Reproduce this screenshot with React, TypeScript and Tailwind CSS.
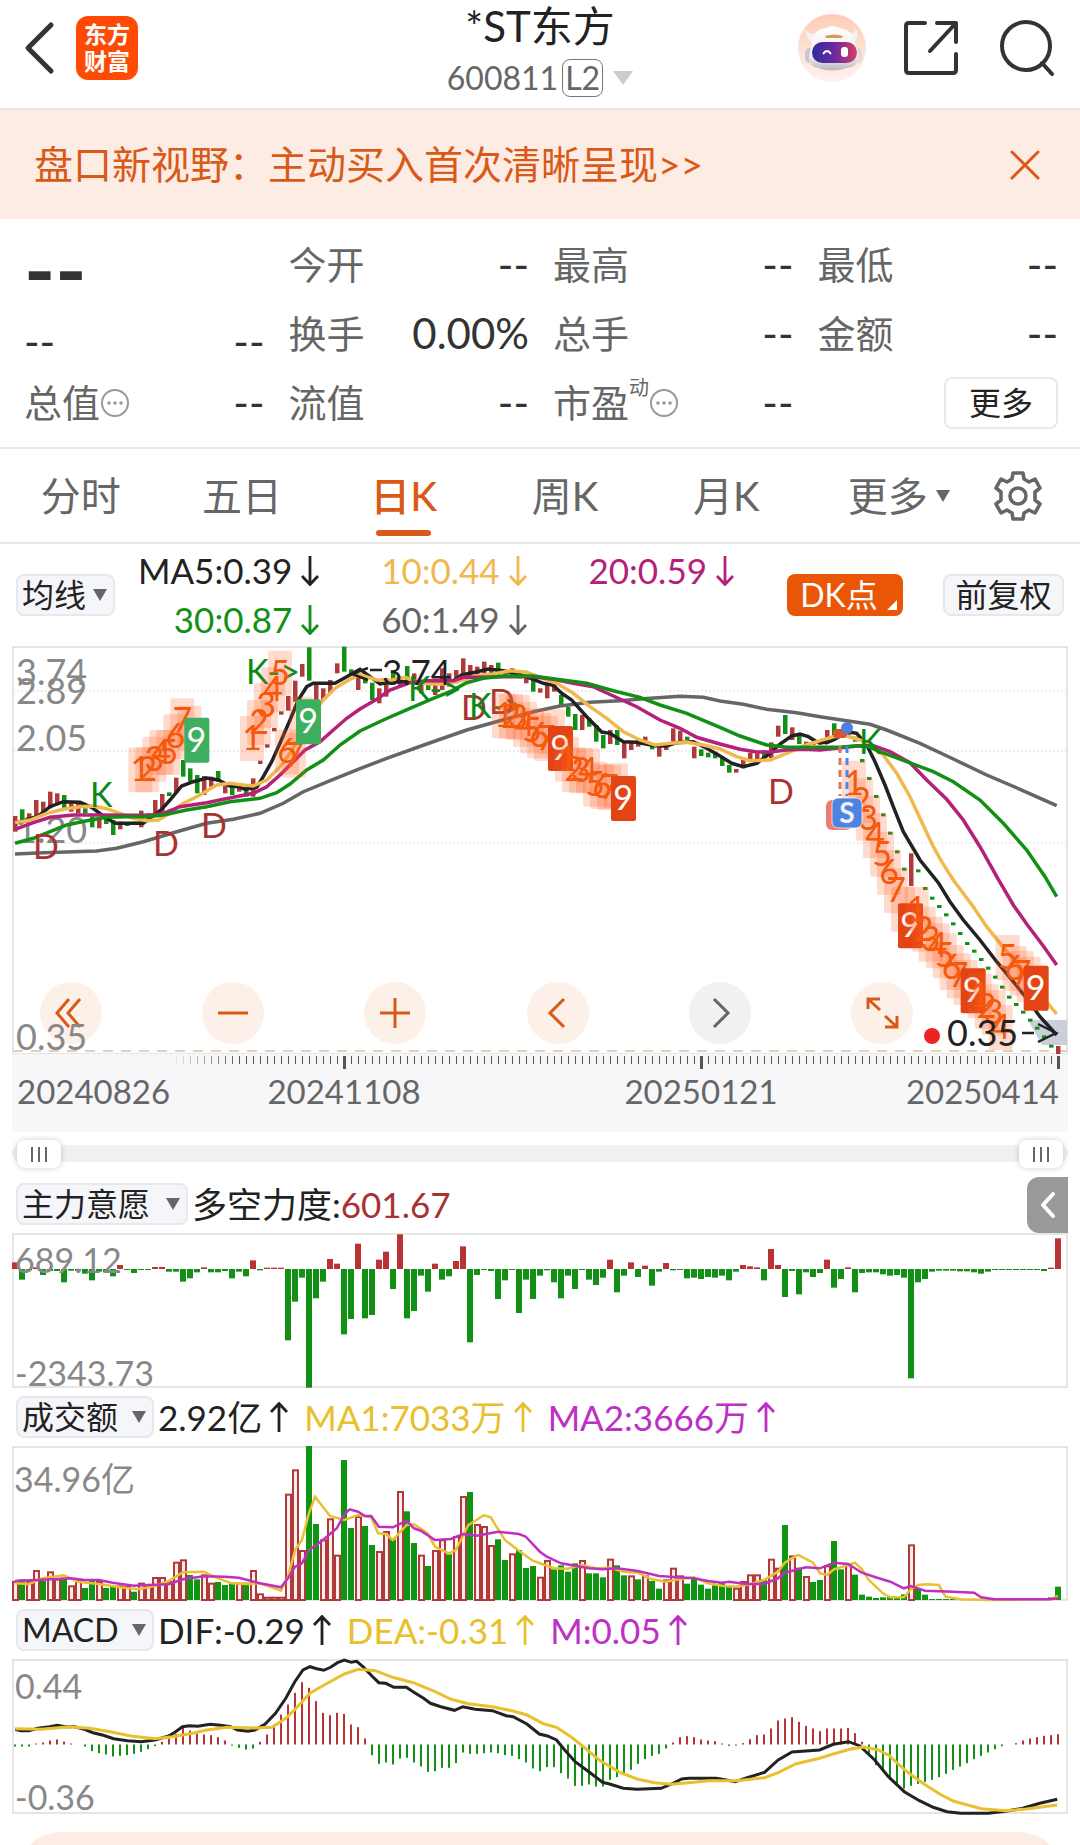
import React from "react";

type Pt = [number, number];

const parse = (s: string): Pt[] =>
  s.trim().split(/\s+/).map((p) => p.split(",").map(Number) as Pt);

const path = (s: string, kx: number, ky: number) =>
  parse(s)
    .map(([x, y], i) => `${i ? "L" : "M"}${(x / kx).toFixed(1)} ${(y / ky).toFixed(1)}`)
    .join("");

const barX = (i: number) => 15 + 7 * i;

/* ---------- Daily K data ---------- */

const CANDLES = `R828-875 G808-840 R820-835 R780-825 R785-818 R755-805 R760-790 G765-805 R790-815 R790-820
G805-820 G830-862 R835-865 G830-852 G840-885 R845-868 G848-858 G845-855 R812-862 R820-835
R780-820 R762-815 G757-768 R713-758 G660-710 G685-725 G705-760 R708-765 R710-740 G693-725
R735-760 G735-765 R735-755 G740-770 R715-770 R662-672 R613-623 R564-574 R514-524 R468-512
R422-485 R372-410 G322-422 R430-480 R445-480 R420-460 R370-400 G320-395 G388-402 R400-450
G415-430 G428-480 R445-490 R430-470 G390-430 R410-440 G378-420 R400-430 R430-460 G425-450
R435-465 R385-450 R400-440 R390-430 R355-415 R375-410 R380-410 R365-400 R375-400 G368-405
R390-410 R385-408 G395-415 R405-430 G415-455 R445-458 R430-475 R430-455 G465-495 G500-530
G522-570 R525-570 G535-560 G555-605 G585-625 R570-612 G570-615 R605-655 R605-630 R600-620
R590-615 G615-628 R620-650 R615-630 R565-605 R572-605 G590-600 R620-655 G628-648 G638-652
G635-655 G650-678 G675-698 R687-698 R655-685 R638-665 R640-665 G632-655 R607-655 R557-590
G525-582 R562-600 G580-612 R605-612 R605-615 R605-615 R570-608 G550-600 R570-590 R565-590
G590-605 G657-667 G711-720 G765-774 G820-829 G875-884 G931-940 G983-992 R940-1038 G988-997
G1041-1050 G1070-1079 G1095-1104 G1120-1129 G1147-1156 G1176-1185 G1206-1215 G1229-1238 G1254-1263 G1280-1289
G1307-1316 G1337-1346 G1367-1376 G1389-1398 G1412-1421 G1436-1445 G1460-1469 G1486-1495 G1514-1523 R1518-1545`
  .split(/\s+/)
  .map((c) => {
    const [top, bottom] = c.slice(1).split("-").map(Number);
    return { up: c[0] === "R", top: top / 3, bottom: bottom / 3 };
  });

const MA60 = `45,942 130,938 220,935 290,933 350,925 430,905 530,875 620,850 700,838 780,820 850,790 910,755 1000,718 1080,686
1160,655 1280,612 1400,570 1500,542 1600,515 1680,498 1770,487 1860,482 1950,475 2040,469 2110,472 2160,483 2230,493 2300,508
2390,518 2460,530 2540,542 2610,553 2660,570 2760,610 2860,657 2960,705 3060,748 3170,797`;
const MA30 = `45,910 100,895 150,875 200,855 260,842 320,832 380,830 440,830 490,825 560,810 620,800 690,785 780,775 830,758 870,732
920,690 970,660 1020,615 1080,573 1150,540 1230,505 1300,475 1350,455 1400,428 1450,415 1510,408 1600,408 1670,418 1760,430
1840,452 1920,472 1980,495 2060,520 2160,562 2220,588 2300,615 2360,622 2460,622 2520,622 2570,617 2610,622 2640,635 2720,665
2800,695 2860,725 2940,780 3010,850 3080,930 3135,1010 3170,1070`;
const MA20 = `45,868 100,848 150,832 220,825 300,825 380,826 450,826 490,820 540,800 620,788 700,772 760,760 800,740 840,705 880,665
915,630 960,605 1000,570 1040,535 1080,507 1130,478 1170,450 1230,428 1280,422 1360,422 1390,412 1440,412 1520,410 1600,410
1660,418 1720,430 1780,440 1840,468 1910,500 1980,540 2040,565 2090,592 2160,612 2220,628 2270,636 2310,636 2360,630 2410,628
2460,630 2510,625 2580,617 2620,617 2670,635 2730,668 2780,720 2840,778 2890,840 2940,920 2995,1018 3040,1095 3080,1152 3130,1218 3170,1275`;
const MA10 = `45,848 90,840 140,820 190,808 240,800 280,798 320,806 360,820 400,835 440,842 475,840 510,820 545,793 600,765 650,735
690,730 730,735 760,738 800,720 840,680 870,640 900,590 930,530 970,480 1005,445 1050,418 1080,404 1130,420 1175,420 1215,412
1260,430 1295,432 1340,432 1390,420 1425,408 1480,402 1530,392 1580,397 1620,412 1670,430 1720,460 1770,500 1820,535 1870,575
1920,600 1965,615 2010,610 2060,607 2110,615 2160,627 2210,650 2250,662 2310,660 2360,640 2410,618 2460,602 2500,590 2540,588
2580,600 2610,615 2650,645 2690,700 2730,770 2760,835 2800,920 2825,965 2860,1020 2920,1100 2960,1160 3010,1222 3060,1280 3110,1350 3170,1422`;
const MA5 = `45,850 80,840 115,828 150,800 190,785 240,787 275,802 310,828 345,850 430,850 485,808 510,780 545,738 580,725 620,714
655,720 690,738 715,740 735,748 770,742 790,710 815,665 840,610 870,540 895,480 920,440 940,430 1005,430 1040,410 1080,388
1110,410 1140,432 1180,425 1220,425 1260,428 1295,430 1350,430 1385,405 1425,397 1465,387 1510,392 1555,402 1600,418 1630,430
1660,436 1685,460 1715,480 1760,530 1805,576 1830,580 1870,605 1910,607 1965,617 2000,618 2030,608 2080,605 2120,625 2160,648
2195,670 2230,680 2270,670 2310,640 2340,612 2375,588 2400,582 2425,590 2450,605 2480,608 2505,598 2540,575 2570,580 2600,615
2625,665 2655,735 2680,800 2710,875 2760,960 2815,1028 2850,1085 2890,1140 2940,1200 2990,1265 3040,1325 3080,1375 3120,1430 3170,1485`;

/* Nine-turn counters: x of the first box, then the top of each box. */
const TURNS: { x: number; tops: number[]; color: string }[] = [
  { x: 385, color: "#3fae5f", tops: [622, 622, 590, 570, 570, 523, 475, 497, 533] },
  { x: 720, color: "#3fae5f", tops: [528, 480, 430, 382, 332, 568, 578, 470, 478] },
  { x: 1476, color: "#e24414", tops: [460, 462, 465, 485, 505, 520, 528, 508, 558] },
  { x: 1665, color: "#e24414", tops: [590, 622, 625, 625, 665, 672, 675, 670, 708] },
  { x: 2526, color: "#e24414", tops: [662, 715, 767, 820, 875, 930, 985, 1040, 1090] },
  { x: 2714, color: "#e24414", tops: [1040, 1100, 1130, 1150, 1180, 1215, 1240, 1260, 1285] },
  { x: 2903, color: "#e24414", tops: [1300, 1333, 1350, 1395, 1185, 1218, 1232, 1250, 1277] },
];

/* ---------- Indicator data ---------- */

const FORCE = `20 -32 -4 5 -18 -6 -6 -40 -5 -5 -14 -34 -8 -10 -22 12 -3 -12 -3 -3 6 6 -8 -8 -38 -28 -10 5 -10 -10 -6 -28 -8 -22 26
-4 4 4 4 -214 -98 -26 -356 -88 -38 30 16 -196 -150 76 -148 -138 28 52 -60 104 -148 -126 -20 -68 16 -32 -22 24 68 -220 -18 -3 -6 -90
-34 -3 -132 -32 -90 -20 -4 -40 -88 -20 -60 -3 -32 -48 -26 28 -70 -20 20 -24 10 -50 -8 18 -4 -3 -28 -26 -30 -24 -26 -20 -34 -8 12 8 5
-34 60 12 -84 -6 -76 -10 -24 -12 28 -56 -30 5 -70 -12 -10 -10 -16 -20 -18 -26 -328 -40 -30 -8 -5 -5 -5 -7 -7 -10 -14 -8 -3 -3 -3 -3 -3
-3 -3 -6 4 92`.split(/\s+/).map(Number);

const VOLUME = `R57 G62 R57 R90 G57 R86 R64 G67 R44 R62 G36 G62 R57 G36 G42 R44 R42 G25 R52 R47 R69 R69 R57 R115 R122 G75 G62 R77 R52
G54 G45 G52 R52 G52 R90 R20 R10 R10 R10 R319 R392 R150 G462 G228 R182 R245 R136 G420 G216 R252 G222 G165 R147 R207 G182 R327 G266 G171
R136 G102 R150 R182 G137 R192 R312 G324 R228 R222 R165 G182 G120 R140 G150 G96 G102 R70 R120 G92 G104 G85 G110 R120 G80 G80 G68 R124
G104 G74 R74 G62 R74 G57 G34 R62 R97 R74 G49 G67 G46 G34 G44 G52 G42 R37 R57 R77 R77 G62 R124 R97 G225 R134 G97 R72 G54 G60 R104 G177
G92 R107 G76 G16 G10 G6 G8 G10 G10 G17 R167 G34 G16 G3 G3 G3 G3 G3 G1 G1 G1 G1 G1 G1 G1 G1 G1 G1 G1 G1 G8 G40`
  .split(/\s+/)
  .map((v) => ({ up: v[0] === "R", h: Number(v.slice(1)) / 3 }));

const VOL_MA1 = `43,1090 84,1092 124,1075 185,1066 226,1085 287,1092 348,1102 400,1108 450,1098 490,1083 531,1057 592,1055 633,1075
673,1090 714,1092 755,1090 816,1112 836,1070 857,990 877,960 897,880 915,830 958,888 1000,900 1040,885 1078,892 1098,940 1121,942
1141,960 1181,915 1202,913 1242,940 1263,980 1304,1000 1324,990 1360,915 1405,886 1425,892 1466,960 1507,992 1547,1022 1568,1030
1609,1045 1649,1046 1690,1035 1731,1045 1771,1043 1812,1055 1852,1058 1893,1078 1934,1085 1975,1077 2015,1072 2056,1090 2097,1097
2137,1100 2178,1093 2218,1080 2259,1055 2279,1028 2300,1015 2318,1005 2361,1028 2381,1060 2402,1065 2422,1048 2463,1035 2483,1028
2503,1048 2523,1080 2564,1120 2585,1132 2625,1132 2645,1108 2666,1095 2693,1093 2726,1095 2746,1130 2788,1138 2868,1140 3048,1138 3072,1128`;
const VOL_MA2 = `43,1083 104,1080 150,1078 206,1075 246,1080 287,1080 327,1088 389,1097 429,1095 490,1093 531,1078 592,1069 653,1070
694,1073 755,1090 816,1102 836,1075 857,1040 877,1030 897,990 938,960 978,925 999,885 1015,868 1040,875 1060,888 1078,888 1100,920
1141,922 1181,902 1202,925 1222,932 1263,960 1310,957 1344,942 1385,947 1446,935 1507,942 1527,950 1568,995 1588,1010 1629,1030
1670,1037 1710,1045 1751,1048 1792,1045 1852,1053 1914,1068 1968,1072 2015,1075 2056,1083 2097,1088 2117,1085 2168,1092 2218,1092
2259,1075 2279,1058 2340,1042 2381,1045 2422,1028 2463,1032 2503,1058 2543,1072 2585,1085 2625,1105 2645,1098 2686,1112 2768,1115
2829,1118 2849,1132 2888,1138 3048,1138 3072,1135`;

const MACD = `-6 -6 -6 3 6 12 15 9 3 0 -6 -20 -26 -30 -36 -34 -32 -28 -22 -14 -5 8 18 32 52 42 32 30 28 22 12 -3 -10 -15 -12 8 30 60 90
120 155 187 170 130 95 88 95 92 60 52 18 -32 -58 -54 -60 -42 -40 -54 -66 -82 -80 -70 -70 -56 -24 -28 -28 -26 -24 -26 -32 -34 -44 -54
-72 -80 -68 -68 -86 -102 -124 -124 -120 -126 -126 -106 -98 -92 -76 -58 -44 -34 -28 -12 6 22 25 22 15 12 10 3 -4 -3 4 16 28 30 48 72 78
82 68 56 48 40 48 48 48 50 34 8 -30 -62 -82 -106 -124 -132 -124 -118 -112 -106 -98 -88 -76 -66 -56 -44 -34 -24 -14 -5 0 4 12 18 22 26 28 31`
  .split(/\s+/)
  .map(Number);
const DIF = `22,388 30,392 42,392 55,385 72,380 83,376 95,380 108,380 120,386 135,398 150,406 165,416 185,422 205,425 225,420 245,408
255,395 265,380 275,377 287,379 305,373 320,376 335,380 345,390 360,394 370,390 385,372 400,340 415,295 428,245 440,210 450,200
460,206 470,211 480,202 490,188 500,180 510,187 518,184 527,200 540,228 550,248 560,250 572,262 590,262 602,278 615,295 625,310
640,320 660,331 672,320 690,328 715,332 735,347 745,350 765,372 783,402 795,408 808,420 820,450 835,485 855,515 875,547 885,552
905,565 925,568 960,565 975,552 990,537 1000,535 1040,535 1068,545 1085,533 1110,517 1130,480 1150,456 1190,450 1210,433 1232,425
1248,437 1270,480 1290,530 1313,575 1335,602 1355,622 1375,635 1395,640 1435,640 1460,634 1485,625 1510,610 1535,598`;
const DEA = `22,386 60,388 100,380 130,385 160,395 190,408 225,416 250,410 280,400 300,390 330,382 370,384 395,382 415,355 430,325
450,280 470,256 500,222 520,208 545,212 570,232 600,248 630,273 655,298 680,311 715,320 745,333 765,345 790,372 808,382 830,412
850,445 870,480 900,517 925,537 950,548 975,553 1000,548 1030,542 1070,542 1110,533 1130,518 1155,492 1190,475 1210,462 1235,447
1255,441 1275,450 1290,465 1315,512 1340,550 1365,583 1385,604 1405,615 1425,626 1460,632 1490,627 1535,615`;

/* ---------- Small pieces ---------- */

function Arrow({ up = false }: { up?: boolean }) {
  return (
    <svg viewBox="0 0 18 30" className="h-[30px] w-[18px] shrink-0" fill="none" stroke="currentColor" strokeWidth="2.8">
      <path d={up ? "M9 30V1.5M1 10L9 1.500L17 10" : "M9 0V28.500M1 20L9 28.500L17 20"} />
    </svg>
  );
}

function Caret({ className }: { className: string }) {
  return (
    <svg viewBox="0 0 14 12" preserveAspectRatio="none" className={className} fill="currentColor">
      <path d="M0 0H14L7 12Z" />
    </svg>
  );
}

function Picker({ label, options, className }: { label: string; options: string[]; className: string }) {
  return (
    <span className={`relative block h-[42px] shrink-0 ${className}`}>
      <select
        aria-label={label}
        className="block h-full w-full appearance-none rounded-lg border-2 border-[#e6e8ec] bg-[#f5f6f9] pl-1 text-[32px] leading-9 text-[#222]"
      >
        {options.map((o) => (
          <option key={o}>{o}</option>
        ))}
      </select>
      <Caret className="pointer-events-none absolute right-2 top-[15px] h-3 w-[14px] text-[#666]" />
    </span>
  );
}

function Dots() {
  return (
    <button type="button" aria-label="说明" className="text-[#999]">
      <svg viewBox="0 0 30 30" className="h-[30px] w-[30px]" fill="none" stroke="currentColor" strokeWidth="2">
        <circle cx="15" cy="15" r="13" />
        <g fill="currentColor" stroke="none">
          <circle cx="9" cy="15" r="1.800" />
          <circle cx="15" cy="15" r="1.800" />
          <circle cx="21" cy="15" r="1.800" />
        </g>
      </svg>
    </button>
  );
}

function Cell({ label, value = "--" }: { label?: React.ReactNode; value?: string }) {
  return (
    <div className="flex items-center justify-between">
      <span className="flex items-center text-[38px] text-[#666]">{label}</span>
      <span className="text-[42px] text-[#333]">{value}</span>
    </div>
  );
}

function Robot() {
  return (
    <svg viewBox="0 0 68 68" className="h-[68px] w-[68px]">
      <defs>
        <linearGradient id="halo" x1="0" y1="0" x2="0" y2="1">
          <stop offset="0" stopColor="#fdccb4" />
          <stop offset="1" stopColor="#fff3ee" />
        </linearGradient>
        <linearGradient id="visor" x1="0" y1="0" x2="1" y2="0">
          <stop offset="0" stopColor="#2f2a9c" />
          <stop offset="0.500" stopColor="#6b2aa0" />
          <stop offset="1" stopColor="#d8405f" />
        </linearGradient>
        <linearGradient id="shell" x1="0" y1="0" x2="0" y2="1">
          <stop offset="0" stopColor="#ffffff" />
          <stop offset="0.700" stopColor="#eeebef" />
          <stop offset="1" stopColor="#b9b6c0" />
        </linearGradient>
      </defs>
      <circle cx="34" cy="34" r="34" fill="url(#halo)" />
      <rect x="7" y="34" width="10" height="15" rx="5" fill="#c9c6cf" />
      <rect x="54" y="34" width="10" height="15" rx="5" fill="#dddbe2" />
      <path d="M7 15Q8 25 15 28L20 19Q11 22 7 15ZM58 14Q62 22 56 28L49 19Q57 21 58 14Z" fill="#f4f1f4" />
      <path d="M13 33Q14 15 28 14Q34 10 41 14Q55 15 58 32L61 42Q60 53 49 54Q34 59 20 54Q10 52 11 42Z" fill="url(#shell)" />
      <path d="M27 22Q36 19 45 22L44 24H28Z" fill="#d99a62" />
      <rect x="14" y="28" width="45" height="21" rx="10.500" fill="url(#visor)" />
      <path d="M25 40Q29 34 33 40" fill="none" stroke="#fff" strokeWidth="2" />
      <rect x="43" y="33" width="7" height="10" rx="3" fill="#fff" />
    </svg>
  );
}

/* ---------- Sections ---------- */

function Header() {
  return (
    <header className="relative flex h-[110px] items-center justify-between border-b-2 border-[#e6e6e6] pl-[22px] pr-6 pb-3">
      <div className="flex items-center gap-5">
        <button type="button" aria-label="返回">
          <svg viewBox="0 0 34 54" className="h-[54px] w-[34px]" fill="none" stroke="#333" strokeWidth="5" strokeLinecap="round" strokeLinejoin="round">
            <path d="M29 4L6 27L29 50" />
          </svg>
        </button>
        <a
          href="#home"
          className="flex h-[64px] w-[62px] flex-col items-center justify-center rounded-xl bg-[#ff4a06] text-[23px] font-bold leading-[27px] text-white"
        >
          <span>东方</span>
          <span>财富</span>
        </a>
      </div>
      <div className="absolute inset-x-0 top-0 mx-auto flex w-[240px] flex-col items-center">
        <h1 className="text-[42px] leading-[52px] text-[#222]">*ST东方</h1>
        <button type="button" className="flex h-[52px] items-center text-[32px] text-[#666]">
          600811
          <span className="ml-1 rounded-lg border border-[#777] px-[2px] leading-9">L2</span>
          <Caret className="ml-[10px] h-[14px] w-5 text-[#ccc]" />
        </button>
      </div>
      <div className="flex items-center gap-[38px]">
        <button type="button" aria-label="智能助手">
          <Robot />
        </button>
        <button type="button" aria-label="分享">
          <svg viewBox="0 0 56 56" className="h-14 w-14" fill="none" stroke="#333" strokeWidth="4" strokeLinecap="round" strokeLinejoin="round">
            <path d="M21 3H5Q2 3 2 6V50Q2 53 5 53H49Q52 53 52 50V34M33 3H52V22M52 3L26 31" />
          </svg>
        </button>
        <button type="button" aria-label="搜索">
          <svg viewBox="0 0 58 58" className="h-[58px] w-[58px]" fill="none" stroke="#333" strokeWidth="4" strokeLinecap="round">
            <circle cx="28" cy="27" r="24" />
            <path d="M44 44L54 55" />
          </svg>
        </button>
      </div>
    </header>
  );
}

function Banner() {
  return (
    <div className="flex h-[109px] items-center justify-between bg-[#fcece3] pl-[34px] pr-[38px] text-[#d95a18]">
      <a href="#orders" className="text-[39px]">
        盘口新视野：主动买入首次清晰呈现&gt;&gt;
      </a>
      <button type="button" aria-label="关闭">
        <svg viewBox="0 0 34 34" className="h-[34px] w-[34px]" fill="none" stroke="currentColor" strokeWidth="3" strokeLinecap="round">
          <path d="M4 4L30 30M30 4L4 30" />
        </svg>
      </button>
    </div>
  );
}

function Quote() {
  return (
    <section className="grid auto-rows-[69px] grid-cols-4 gap-x-6 border-b-2 border-[#e8e8e8] pl-6 pr-[22px] pb-[10px] pt-[11px]">
      <div className="flex items-center pt-2 text-[84px] font-bold leading-[61px] text-[#333]">--</div>
      <Cell label="今开" />
      <Cell label="最高" />
      <Cell label="最低" />
      <div className="flex items-center justify-between pt-4 text-[42px] leading-[53px] text-[#333]">
        <span>--</span>
        <span>--</span>
      </div>
      <Cell label="换手" value="0.00%" />
      <Cell label="总手" />
      <Cell label="金额" />
      <Cell label={<>总值<Dots /></>} />
      <Cell label="流值" />
      <Cell label={<>市盈<sup className="-top-4 text-[20px]">动</sup><Dots /></>} />
      <div className="flex items-center justify-end">
        <button type="button" className="h-[52px] w-[114px] rounded-lg border-2 border-[#e8eaea] text-[32px] leading-none text-[#222]">
          更多
        </button>
      </div>
    </section>
  );
}

function Tabs() {
  const tabs = ["分时", "五日", "日K", "周K", "月K"];
  return (
    <nav className="flex h-[95px] border-b-2 border-[#e8e8e8] text-[40px] text-[#666]">
      {tabs.map((t) => (
        <button
          key={t}
          type="button"
          className={`relative flex-[162] ${t === "日K" ? "font-medium text-[#d95a18]" : ""}`}
        >
          {t}
          {t === "日K" && <span className="absolute inset-x-0 bottom-[6px] mx-auto h-[6px] w-[55px] rounded-full bg-[#d95a18]" />}
        </button>
      ))}
      <button type="button" className="flex flex-[184] items-center justify-center gap-2">
        更多
        <Caret className="h-3 w-[14px]" />
      </button>
      <button type="button" aria-label="设置" className="flex flex-[86] items-center pl-1">
        <svg viewBox="0 0 48 50" className="h-[50px] w-12" fill="none" stroke="currentColor" strokeWidth="3.600" strokeLinejoin="round">
          <path d="M19 2H29L30 8L35 11L41 8L46 17L41 21V29L46 33L41 42L35 39L30 42L29 48H19L18 42L13 39L7 42L2 33L7 29V21L2 17L7 8L13 11L18 8Z" />
          <circle cx="24" cy="25" r="8" />
        </svg>
      </button>
    </nav>
  );
}

function Legend() {
  const items = [
    ["MA5:0.39", "text-[#222]"],
    ["10:0.44", "text-[#f0b850]"],
    ["20:0.59", "text-[#b5207a]"],
    ["30:0.87", "text-[#129016]"],
    ["60:1.49", "text-[#666]"],
  ];
  return (
    <div className="flex h-[102px] items-center px-4">
      <Picker label="均线" options={["均线"]} className="w-[99px]" />
      <ul className="mr-[50px] grid flex-1 grid-cols-3">
        {items.map(([text, color]) => (
          <li key={text} className={`flex h-[49px] items-center justify-end gap-[9px] pr-[3px] text-[35px] ${color}`}>
            {text}
            <Arrow />
          </li>
        ))}
      </ul>
      <button type="button" className="relative h-[42px] w-[116px] rounded-lg bg-[#e85606] pr-3 text-[32px] leading-none text-white">
        DK点
        <svg viewBox="0 0 10 10" className="absolute bottom-[6px] right-[6px] h-[10px] w-[10px]" fill="#fff">
          <path d="M10 0V10H0Z" />
        </svg>
      </button>
      <button type="button" className="ml-10 h-[42px] w-[121px] rounded-lg border-2 border-[#e6e8ec] bg-[#f5f6f9] text-[32px] leading-none text-[#222]">
        前复权
      </button>
    </div>
  );
}

function MainChart() {
  const line = "fill-none stroke-[3.500]";
  const label = "fill-[#888] text-[36px]";
  const d = "fill-[#a83232] text-[34px]";
  const k = "fill-[#0a8a14] text-[34px]";
  return (
    <svg viewBox="12 106 1056 408" className="block w-full" role="img" aria-label="日K">
      <rect x="13" y="107" width="1054" height="407" fill="none" stroke="#e5e5e5" strokeWidth="2" />
      {[151, 211, 303].map((y) => (
        <line key={y} x1="13" x2="1067" y1={y} y2={y} stroke="#dcdcdc" strokeDasharray="2 2" />
      ))}
      <line x1="13" x2="1067" y1="511" y2="511" stroke="#e2cfb4" strokeWidth="2" strokeDasharray="10 8" />
      <text x="16" y="145" className={label}>3.74</text>
      <text x="16" y="164" className={label}>2.89</text>
      <text x="16" y="211" className={label}>2.05</text>
      <text x="16" y="303" className={label}>1.20</text>
      <path d="M1028 480H1067V505H1042Z" fill="#cbd0d8" />
      {CANDLES.map((c, i) => (
        <rect key={i} x={barX(i) - 2} y={c.top} width="4.500" height={c.bottom - c.top} fill={c.up ? "#b03a3a" : "#129016"} />
      ))}
      <path d={path(MA60, 3, 3)} className={line} stroke="#666" />
      <path d={path(MA5, 3, 3)} className={line} stroke="#222" />
      <path d={path(MA10, 3, 3)} className={line} stroke="#f0b84e" />
      <path d={path(MA20, 3, 3)} className={line} stroke="#b5207a" />
      <path d={path(MA30, 3, 3)} className={line} stroke="#129016" />
      <text x="90" y="267" className={k}>K</text>
      <text x="33" y="319" className={d}>D</text>
      <text x="153" y="316" className={d}>D</text>
      <text x="201" y="298" className={d}>D</text>
      <text x="246" y="144" className={k}>K-&gt;</text>
      <text x="408" y="161" className={k}>K-&gt;</text>
      <text x="461" y="180" className={d}>D</text>
      <text x="469" y="178" className={k}>K-&gt;</text>
      <text x="489" y="174" className={d}>D</text>
      <text x="768" y="264" className={d}>D</text>
      <text x="859" y="214" className={k}>K</text>
      {TURNS.map((t) => (
        <g key={t.x} textAnchor="middle" className="text-[34px]">
          {t.tops.slice(0, 8).map((top, i) => (
            <rect key={i} x={t.x / 3 + i * 7} y={top / 3} width="24" height="45" rx="2" fill="#ff5a1e" fillOpacity="0.220" />
          ))}
          {t.tops.slice(0, 7).map((top, i) => (
            <text key={i} x={t.x / 3 + i * 7 + 12} y={top / 3 + 34} fill="#f4590c">
              {i + 1}
            </text>
          ))}
          <rect x={t.x / 3 + 56} y={t.tops[8] / 3} width="25" height="45" rx="2" fill={t.color} />
          <text x={t.x / 3 + 68} y={t.tops[8] / 3 + 34} fill="#fff">9</text>
        </g>
      ))}
      <path d="M840 206V256" stroke="#e2705e" strokeWidth="3" strokeDasharray="7 5" />
      <path d="M847 206V256" stroke="#4f83e6" strokeWidth="3" strokeDasharray="7 5" />
      <rect x="833" y="189" width="14" height="9" rx="4" fill="#d9532c" />
      <circle cx="847" cy="188" r="6" fill="#4c7fe0" />
      <rect x="826" y="260" width="26" height="30" rx="6" fill="#ee7a70" />
      <rect x="832" y="258" width="30" height="30" rx="6" fill="#4f83e0" stroke="#fff" strokeOpacity="0.700" />
      <text x="847" y="283" textAnchor="middle" className="fill-[#eef1fb] text-[28px] font-bold">S</text>
      <text x="382" y="145" className="fill-[#222] text-[35px]">3.74</text>
      <path d="M368 128L352 134L368 140M370 130H382" fill="none" stroke="#222" strokeWidth="2.500" />
      <circle cx="932" cy="496" r="8" fill="#ee2222" />
      <text x="947" y="506" className="fill-[#222] text-[36px]">0.35</text>
      <path d="M1022 493H1034M1038 484L1056 493L1038 502" fill="none" stroke="#222" strokeWidth="2.500" />
    </svg>
  );
}

function ChartControls() {
  const circle = "flex h-[62px] w-[62px] items-center justify-center rounded-full";
  const icons: [string, string][] = [
    ["最早", "M29 17L17 31L29 45M40 17L28 31L40 45"],
    ["缩小", "M16 31H46"],
    ["放大", "M16 31H46M31 16V46"],
    ["左移", "M37 17L23 31L37 45"],
    ["右移", "M25 17L39 31L25 45"],
    ["全屏", "M17 27V17H29M17 17L29 28M46 34V45H34M46 45L34 34"],
  ];
  return (
    <div className="absolute bottom-[10px] left-7 right-[155px] flex justify-between">
      {icons.map(([name, shape]) => (
        <button
          key={name}
          type="button"
          aria-label={name}
          className={name === "右移" ? `${circle} bg-[#f0f0f0]/90 text-[#666]` : `${circle} bg-[#fdeee5]/90 text-[#d95a18]`}
        >
          <svg viewBox="0 0 62 62" className="h-full w-full" fill="none" stroke="currentColor" strokeWidth="3">
            <path d={shape} />
          </svg>
        </button>
      ))}
    </div>
  );
}

function TimeAxis() {
  return (
    <svg viewBox="12 0 1056 78" className="block w-full bg-[#f7f7fa]">
      {CANDLES.map((_, i) => {
        const major = i === 47 || i === 98 || i === 149;
        return (
          <rect
            key={i}
            x={barX(i) - (major ? 1 : 0)}
            y="2"
            width={major ? 3 : 1}
            height={major ? 13 : 8}
            fill="#555"
            opacity={Math.max(0, Math.min(1, (i - 22) / 10))}
          />
        );
      })}
      <g className="fill-[#666] text-[33px]">
        <text x="17" y="50">20240826</text>
        <text x="344" y="50" textAnchor="middle">20241108</text>
        <text x="701" y="50" textAnchor="middle">20250121</text>
        <text x="1059" y="50" textAnchor="end">20250414</text>
      </g>
    </svg>
  );
}

function RangeBar() {
  const input =
    "pointer-events-none absolute inset-x-[5px] top-2 h-7 appearance-none bg-transparent [&::-webkit-slider-thumb]:pointer-events-auto [&::-webkit-slider-thumb]:h-7 [&::-webkit-slider-thumb]:w-11 [&::-webkit-slider-thumb]:appearance-none [&::-webkit-slider-thumb]:rounded-lg [&::-webkit-slider-thumb]:bg-white [&::-webkit-slider-thumb]:bg-[linear-gradient(90deg,transparent_14px,#666_14px,#666_16px,transparent_16px,transparent_21px,#666_21px,#666_23px,transparent_23px,transparent_28px,#666_28px,#666_30px,transparent_30px)] [&::-webkit-slider-thumb]:bg-[length:100%_15px] [&::-webkit-slider-thumb]:bg-center [&::-webkit-slider-thumb]:bg-no-repeat [&::-webkit-slider-thumb]:shadow-[0_0_6px_rgba(0,0,0,0.200)]";
  return (
    <div className="relative flex h-[43px] items-center">
      <div className="h-[17px] w-full rounded-full bg-[#f0f0f3]" />
      <input type="range" aria-label="起始" min="0" max="100" defaultValue="0" className={input} />
      <input type="range" aria-label="结束" min="0" max="100" defaultValue="100" className={input} />
    </div>
  );
}

function Panel({ head, children, viewBox }: { head: React.ReactNode; children: React.ReactNode; viewBox: string }) {
  return (
    <section>
      <div className="relative flex h-[58px] items-center pl-1 text-[35px]">{head}</div>
      <svg viewBox={viewBox} className="block w-full overflow-visible">
        {children}
      </svg>
    </section>
  );
}

function Frame({ y }: { y: number }) {
  return <rect x="13" y={y + 1} width="1054" height="153" fill="none" stroke="#e5e5e5" strokeWidth="2" />;
}

function ForcePanel() {
  return (
    <Panel
      viewBox="12 13 1056 155"
      head={
        <>
          <Picker label="指标一" options={["主力意愿"]} className="w-[172px]" />
          <span className="ml-1 text-[#222]">
            多空力度:<span className="text-[#a83232]">601.67</span>
          </span>
          <button type="button" aria-label="展开" className="absolute bottom-0 right-0 flex h-14 w-[41px] items-center justify-center rounded-l-xl bg-[#999]">
            <svg viewBox="0 0 16 28" className="h-7 w-4" fill="none" stroke="#fff" strokeWidth="4" strokeLinecap="round" strokeLinejoin="round">
              <path d="M13 3L3 14L13 25" />
            </svg>
          </button>
        </>
      }
    >
      <Frame y={13} />
      {FORCE.map((v, i) => {
        const h = Math.abs(v) / 3;
        return <rect key={i} x={barX(i) - 3} y={v > 0 ? 49 - h : 49} width="6" height={h} fill={v > 0 ? "#b83434" : "#129016"} />;
      })}
      <g className="fill-[#888] text-[34px]">
        <text x="15" y="53">689.12</text>
        <text x="15" y="166">-2343.73</text>
      </g>
    </Panel>
  );
}

function VolumePanel() {
  return (
    <Panel
      viewBox="12 226 1056 155"
      head={
        <>
          <Picker label="指标二" options={["成交额"]} className="w-[138px]" />
          <ul className="ml-1 flex gap-4">
            <li className="flex items-center gap-2 text-[#222]">2.92亿<Arrow up /></li>
            <li className="flex items-center gap-2 text-[#e8c02c]">MA1:7033万<Arrow up /></li>
            <li className="flex items-center gap-2 text-[#be2fc4]">MA2:3666万<Arrow up /></li>
          </ul>
        </>
      }
    >
      <Frame y={226} />
      {VOLUME.map((v, i) =>
        v.up ? (
          <rect key={i} x={barX(i) - 2} y={381 - v.h} width="5" height={Math.max(1, v.h - 1)} fill="#fdeeee" stroke="#b03a3a" strokeWidth="2" />
        ) : (
          <rect key={i} x={barX(i) - 3} y={380 - v.h} width="6" height={v.h} fill="#0e9612" />
        ),
      )}
      <path d={path(VOL_MA1, 2.904, 3)} className="fill-none stroke-[#e8c030] stroke-[2.500]" />
      <path d={path(VOL_MA2, 2.904, 3)} className="fill-none stroke-[#c02fc0] stroke-[2.500]" />
      <text x="14" y="272" className="fill-[#888] text-[34px]">34.96亿</text>
    </Panel>
  );
}

function MacdPanel() {
  return (
    <Panel
      viewBox="12 59 1056 155"
      head={
        <>
          <Picker label="指标三" options={["MACD"]} className="w-[138px]" />
          <ul className="ml-1 flex gap-4">
            <li className="flex items-center gap-2 text-[#222]">DIF:-0.29<Arrow up /></li>
            <li className="flex items-center gap-2 text-[#e8c02c]">DEA:-0.31<Arrow up /></li>
            <li className="flex items-center gap-2 text-[#be2fc4]">M:0.05<Arrow up /></li>
          </ul>
        </>
      }
    >
      <Frame y={59} />
      {MACD.map((v, i) => {
        const h = Math.abs(v) / 3;
        return <rect key={i} x={barX(i) - 1} y={v > 0 ? 144.500 - h : 144.500} width="2" height={h} fill={v > 0 ? "#b83434" : "#129016"} />;
      })}
      <path d={path(DIF, 1.452, 3)} className="fill-none stroke-[#222] stroke-[3]" />
      <path d={path(DEA, 1.452, 3)} className="fill-none stroke-[#e8c030] stroke-[3]" />
      <g className="fill-[#888] text-[34px]">
        <text x="15" y="99">0.44</text>
        <text x="15" y="210">-0.36</text>
      </g>
    </Panel>
  );
}

export default function App() {
  return (
    <div className="bg-white font-['Lato','Noto_Sans_CJK_SC',sans-serif]">
      <Header />
      <Banner />
      <Quote />
      <Tabs />
      <Legend />
      <main className="px-3">
        <div className="relative">
          <MainChart />
          <ChartControls />
          <span className="pointer-events-none absolute bottom-0 left-1 text-[36px] leading-none text-[#888]">0.35</span>
        </div>
        <TimeAxis />
        <RangeBar />
        <ForcePanel />
        <VolumePanel />
        <MacdPanel />
      </main>
      <div className="mt-[18px] h-[13px] overflow-hidden px-5">
        <div className="h-20 rounded-[40px] bg-[#fcece3]" />
      </div>
    </div>
  );
}
